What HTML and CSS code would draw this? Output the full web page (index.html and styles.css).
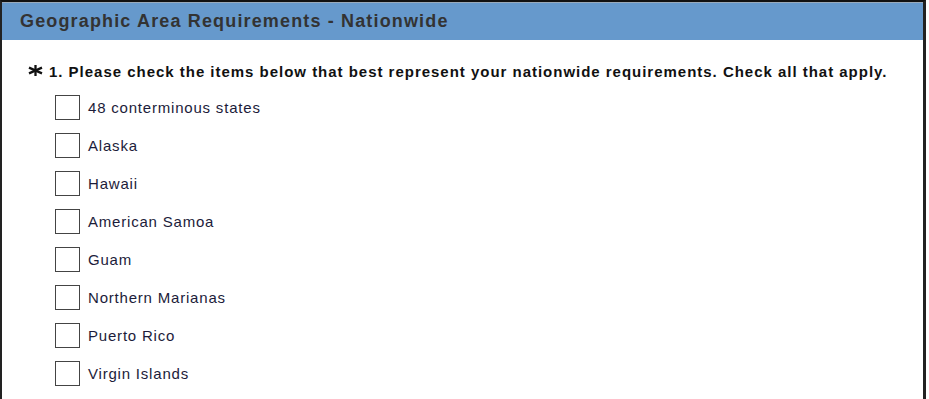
FILE: index.html
```html
<!DOCTYPE html>
<html lang="en">
<head>
  <meta charset="UTF-8" />
  <title>Geographic Area Requirements - Nationwide</title>
  <link rel="stylesheet" href="styles.css">
</head>
<body>
  <div class="survey-page">
    <!-- Section title bar -->
    <div class="section-header">Geographic Area Requirements - Nationwide</div>

    <div class="question">
      <div class="question-title">
        <svg class="required" width="15" height="11" viewBox="0 0 15 11">
          <g stroke="#111" stroke-width="2.3">
            <line x1="7.5" y1="0" x2="7.5" y2="11" />
            <line x1="1" y1="2.6" x2="14" y2="8.4" />
            <line x1="1" y1="8.4" x2="14" y2="2.6" />
          </g>
        </svg>
        <span>1. Please check the items below that best represent your nationwide requirements. Check all that apply.</span>
      </div>
      <ul class="choices">
        <li class="choice"><span class="box"></span>48 conterminous states</li>
        <li class="choice"><span class="box"></span>Alaska</li>
        <li class="choice"><span class="box"></span>Hawaii</li>
        <li class="choice"><span class="box"></span>American Samoa</li>
        <li class="choice"><span class="box"></span>Guam</li>
        <li class="choice"><span class="box"></span>Northern Marianas</li>
        <li class="choice"><span class="box"></span>Puerto Rico</li>
        <li class="choice"><span class="box"></span>Virgin Islands</li>
      </ul>
    </div>
  </div>
</body>
</html>
```

FILE: styles.css
```css
/* ---------- RESET ---------- */
* {
  margin: 0;
  padding: 0;
  box-sizing: border-box;
}
body {
  font-family: "Liberation Sans", Arial, sans-serif;
  background: #fff;
  color: #111;
}

/* ---------- PAGE FRAME ---------- */
.survey-page {
  width: 926px;
  height: 399px;
  border-top: 2px solid #111;
  border-left: 2px solid #222;
  border-right: 3px solid #222;
  overflow: hidden;
}

/* ---------- SECTION HEADER ---------- */
.section-header {
  background: #6699cc;
  border-top: 1px solid #9ab;
  height: 38px;
  padding: 0 0 0 18px;
  display: flex;
  align-items: center;
  font-size: 18px;
  letter-spacing: 1.15px;
  font-weight: bold;
  color: #333;
}

/* ---------- QUESTION ---------- */
.question {
  padding: 23px 0 0 26px;
}
.question-title {
  display: flex;
  align-items: center;
  gap: 6px;
  font-size: 15px;
  letter-spacing: 0.98px;
  font-weight: bold;
  color: #111;
}
.required {
  flex: none;
  margin-top: -3px;
}
.choices {
  list-style: none;
  padding: 8px 0 0 27px;
}
.choice {
  display: flex;
  align-items: center;
  gap: 8px;
  height: 38px;
  font-size: 15px;
  letter-spacing: 0.8px;
  color: #1c1c3a;
}
.box {
  flex: none;
  width: 25px;
  height: 25px;
  border: 1px solid #444;
  background: #fff;
}
```
